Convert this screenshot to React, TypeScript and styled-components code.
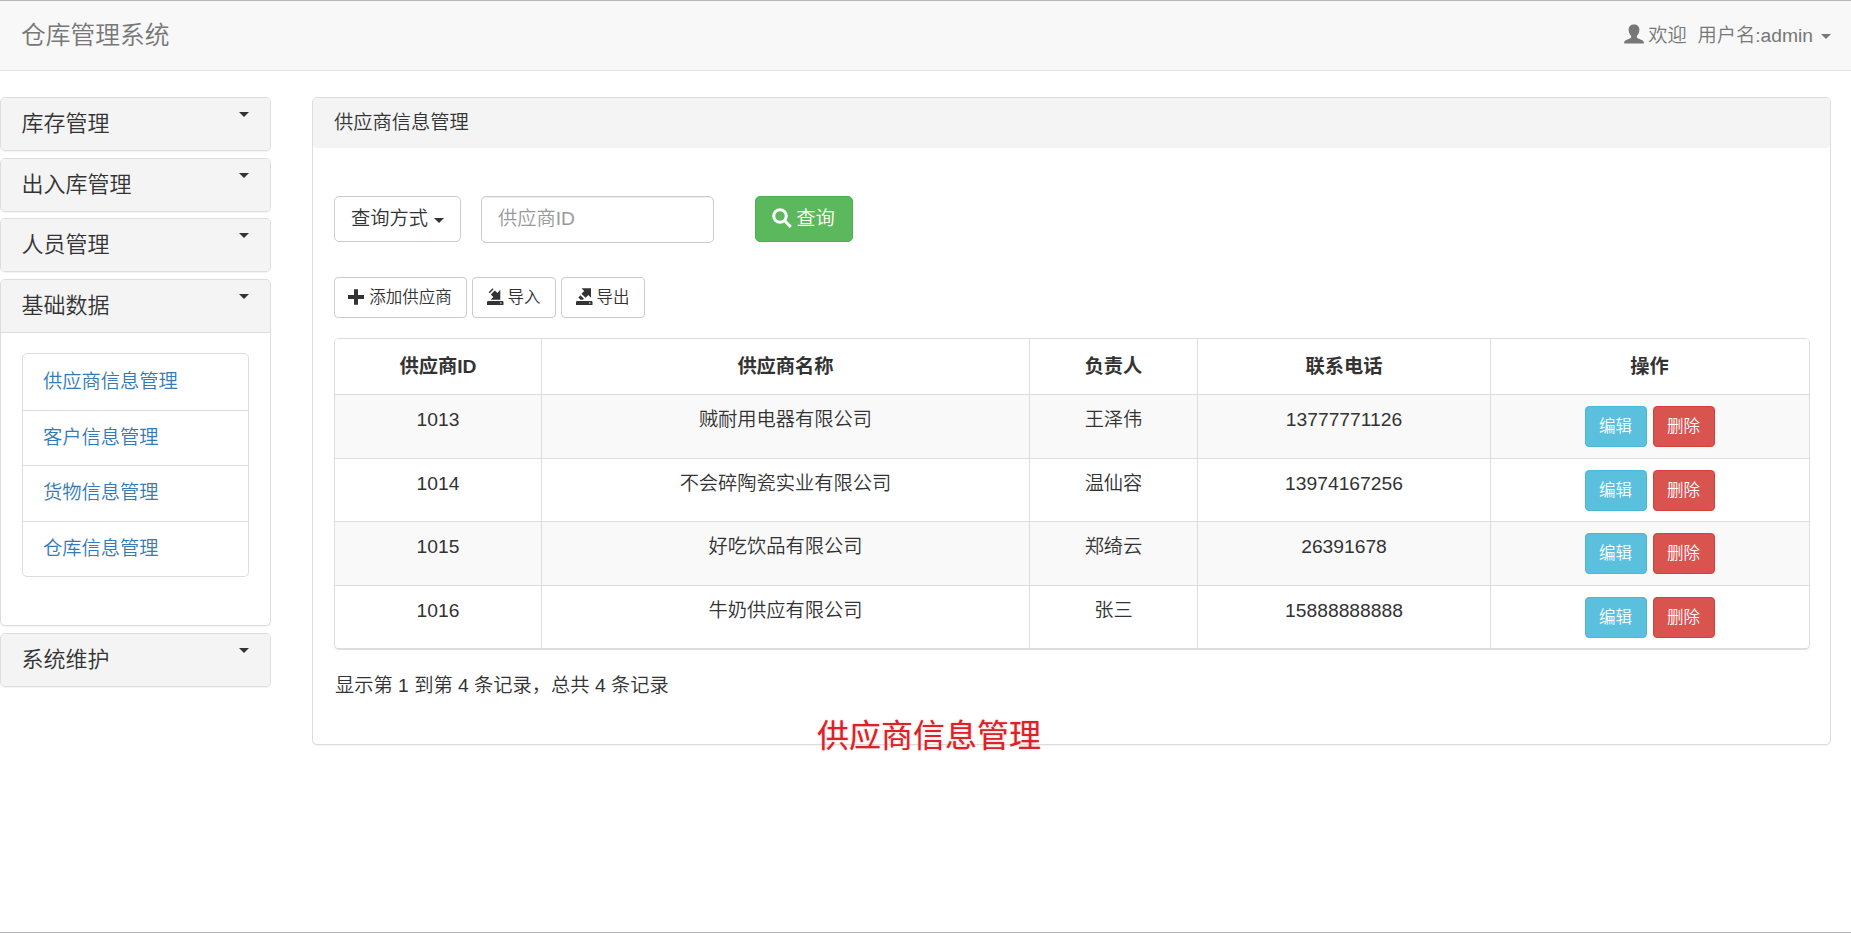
import React from 'react';
import styled, { createGlobalStyle, css } from 'styled-components';

const GlobalStyle = createGlobalStyle`
  * { box-sizing: border-box; }
  body {
    margin: 0;
    background: #fff;
    color: #333;
    font: 350 19.25px/27.5px "Liberation Sans", "Noto Sans CJK SC", sans-serif;
  }
  button, input { font: inherit; color: inherit; }
`;

const Page = styled.div`
  height: 933px;
  border-top: 1px solid #b9b9b9;
  border-bottom: 1px solid #b5b5b9;
  overflow: hidden;
`;

const Navbar = styled.header`
  height: 70px;
  display: flex;
  align-items: center;
  justify-content: space-between;
  padding: 0 20px 0 21px;
  background: #f8f8f8;
  border-bottom: 1px solid #e4e4e4;
  color: #777;
`;

const Brand = styled.div`
  font-size: 24.75px;
`;

const UserMenu = styled.div`
  display: flex;
  align-items: center;
  white-space: pre;
`;

const Caret = styled.span<{ $gap?: number; $drop?: number }>`
  flex: none;
  border: 5px solid transparent;
  border-top-color: currentColor;
  border-bottom: 0;
  margin-left: ${(p) => p.$gap ?? 0}px;
  margin-top: ${(p) => p.$drop ?? 0}px;
`;

const Columns = styled.div`
  display: flex;
  align-items: flex-start;
  padding-top: 26px;
`;

const Sidebar = styled.nav`
  width: 271px;
  margin-right: 41px;
  display: flex;
  flex-direction: column;
  gap: 6.7px;
`;

const Card = styled.section`
  border: 1px solid #ddd;
  border-radius: 5px;
  background: #fff;
  box-shadow: 0 1px 1px rgba(0, 0, 0, 0.05);
`;

const MenuHeading = styled.h4<{ $open?: boolean }>`
  height: 52px;
  margin: 0;
  padding: 14px 21px 0 20.6px;
  display: flex;
  justify-content: space-between;
  font-size: 22px;
  line-height: 24px;
  font-weight: inherit;
  background: #f4f4f4;
  border-radius: 4px;
  ${(p) => p.$open && css`
    height: 53px;
    border-bottom: 1px solid #ddd;
    border-radius: 4px 4px 0 0;
  `}
`;

const MenuBody = styled.div`
  height: 292px;
  padding: 20px 21px 0;
`;

const LinkList = styled.ul`
  list-style: none;
  margin: 0;
  padding: 0;
  border: 1px solid #ddd;
  border-radius: 5px;
`;

const LinkItem = styled.li`
  height: 55.5px;
  padding: 13.6px 20px;
  color: #337ab7;
  & + & { border-top: 1px solid #ddd; padding-top: 13px; }
`;

const Main = styled(Card)`
  position: relative;
  width: 1519px;
  height: 648px;
`;

const MainHeading = styled.div`
  height: 50px;
  padding: 11px 21px;
  background: #f4f4f4;
  border-radius: 4px;
`;

const SearchBar = styled.div`
  display: flex;
  margin: 48px 0 0 21px;
`;

type Tone = 'plain' | 'green' | 'blue' | 'red';
const tones: Record<Tone, [string, string, string]> = {
  plain: ['#fff', '#ccc', '#333'],
  green: ['#5cb85c', '#4cae4c', '#fff'],
  blue: ['#5bc0de', '#46b8da', '#fff'],
  red: ['#d9534f', '#d43f3a', '#fff'],
};

const Button = styled.button<{ $tone?: Tone; $small?: boolean; $width: number }>`
  display: inline-flex;
  align-items: center;
  justify-content: center;
  flex: none;
  width: ${(p) => p.$width}px;
  height: ${(p) => (p.$small ? 41 : 46)}px;
  padding: ${(p) => (p.$small ? '1px 0 0' : '0 0 1px')};
  white-space: nowrap;
  border: 1px solid ${(p) => tones[p.$tone ?? 'plain'][1]};
  border-radius: ${(p) => (p.$small ? 4 : 5)}px;
  background: ${(p) => tones[p.$tone ?? 'plain'][0]};
  color: ${(p) => tones[p.$tone ?? 'plain'][2]};
  font-size: ${(p) => (p.$small ? 16.5 : 19.25)}px;
`;

const SearchInput = styled.input`
  width: 233px;
  height: 47px;
  margin: 0 41px 0 20px;
  padding: 0 16px 2px;
  border: 1px solid #ccc;
  border-radius: 5px;
  box-shadow: inset 0 1px 1px rgba(0, 0, 0, 0.075);
  &::placeholder { color: #999; opacity: 1; }
`;

const Toolbar = styled.div`
  display: flex;
  gap: 5px;
  margin: 34px 0 0 21px;
`;

const Icon = styled.svg<{ $size: number; $gap: number; $lift?: number }>`
  flex: none;
  width: ${(p) => p.$size}px;
  height: ${(p) => p.$size}px;
  margin: 0 ${(p) => p.$gap}px ${(p) => p.$lift ?? 2}px -1px;
  fill: currentColor;
`;

const TableFrame = styled.div`
  width: 1476px;
  margin: 20px 0 0 21px;
  border: 1px solid #ddd;
  border-bottom-width: 2px;
  border-radius: 5px;
  overflow: hidden;
`;

const Row = styled.div<{ $height: number; $striped?: boolean }>`
  display: grid;
  grid-template-columns: 206px 488px 168px 293px 319px;
  height: ${(p) => p.$height}px;
  background: ${(p) => (p.$striped ? '#f9f9f9' : '#fff')};
  & + & { border-top: 1px solid #ddd; }
`;

const Cell = styled.div<{ $head?: boolean }>`
  display: flex;
  justify-content: center;
  gap: 6px;
  padding-top: ${(p) => (p.$head ? 14 : 11)}px;
  font-weight: ${(p) => (p.$head ? 700 : 'inherit')};
  & + & { border-left: 1px solid #ddd; }
  &:last-child { padding-right: 1px; }
`;

const Summary = styled.div`
  margin: 22px 0 0 22px;
`;

const Caption = styled.div`
  position: absolute;
  left: 504px;
  top: 615px;
  font-size: 32px;
  line-height: 46px;
  font-weight: 400;
  color: #dc2127;
  text-shadow: 0 0 2px rgba(220, 33, 39, 0.35);
`;

const UserIcon = () => (
  <Icon viewBox="0 0 20 20" $size={20} $gap={4} $lift={3}>
    <path d="M10 .5c3.300 0 5.400 2 5.400 5.300 0 2.500-1.100 4.900-2.600 6.200v1.100c0 .6.300.9.900 1.200l4.500 2c1.100.5 1.600 1.200 1.600 2.400v.8H.2v-.8c0-1.200.5-1.900 1.600-2.400l4.500-2c.6-.3.9-.6.9-1.200V12C5.700 10.700 4.600 8.300 4.600 5.800 4.600 2.500 6.700.5 10 .5z" />
  </Icon>
);

const SearchIcon = () => (
  <Icon viewBox="0 0 20 20" $size={20} $gap={4}>
    <circle cx="8" cy="8" r="6.300" fill="none" stroke="currentColor" strokeWidth="3" />
    <path d="M11.200 13.200l2-2 6.100 6.100c.4.400.4.800 0 1.200l-.9.900c-.4.400-.8.400-1.200 0z" />
  </Icon>
);

const PlusIcon = () => (
  <Icon viewBox="0 0 16 16" $size={16} $gap={5}>
    <path d="M6 .3h4V6h6v4h-6v5.700H6V10H0V6h6z" />
  </Icon>
);

const DiskIconBase = () => (
  <path fillRule="evenodd" d="M.8 13h15l.7.8V17H0v-3.200zM13 14.500v1h1.500v-1z" />
);

const ImportIcon = () => (
  <Icon viewBox="0 0 17 17" $size={17} $gap={4} $lift={3}>
    <DiskIconBase />
    <path d="M13.300 1.800v9.900H3.600l2.700-2.700-2.500-2.500 4-4 2.600 2.500z" />
    <path d="M2.600 5.200l4-4-1-1-4 4z" />
  </Icon>
);

const ExportIcon = () => (
  <Icon viewBox="0 0 17 17" $size={17} $gap={4} $lift={3}>
    <DiskIconBase />
    <path d="M5.500 .2H15v9.600l-2.700-2.700-2.700 2.700-4.100-4.100 2.700-2.700z" />
    <path d="M4.400 7.300l3.500 3.500-.9.900H4.600L2.400 9.500z" />
  </Icon>
);

const suppliers = [
  ['1013', '贼耐用电器有限公司', '王泽伟', '13777771126'],
  ['1014', '不会碎陶瓷实业有限公司', '温仙容', '13974167256'],
  ['1015', '好吃饮品有限公司', '郑绮云', '26391678'],
  ['1016', '牛奶供应有限公司', '张三', '15888888888'],
];
const rowHeights = [64, 63, 64, 63];
const columns = ['供应商ID', '供应商名称', '负责人', '联系电话', '操作'];
const links = ['供应商信息管理', '客户信息管理', '货物信息管理', '仓库信息管理'];
const menus = ['库存管理', '出入库管理', '人员管理', '基础数据', '系统维护'];

export default function App() {
  return (
    <Page>
      <GlobalStyle />
      <Navbar>
        <Brand>仓库管理系统</Brand>
        <UserMenu>
          <UserIcon />
          <span>欢迎&nbsp; 用户名:admin</span>
          <Caret $gap={8} $drop={2} />
        </UserMenu>
      </Navbar>
      <Columns>
        <Sidebar>
          {menus.map((name) => {
            const open = name === '基础数据';
            return (
              <Card key={name}>
                <MenuHeading $open={open}>
                  {name}
                  <Caret />
                </MenuHeading>
                {open && (
                  <MenuBody>
                    <LinkList>
                      {links.map((link) => <LinkItem key={link}>{link}</LinkItem>)}
                    </LinkList>
                  </MenuBody>
                )}
              </Card>
            );
          })}
        </Sidebar>
        <Main>
          <MainHeading>供应商信息管理</MainHeading>
          <SearchBar>
            <Button $width={127}>查询方式<Caret $gap={6} $drop={4} /></Button>
            <SearchInput placeholder="供应商ID" />
            <Button $tone="green" $width={98}><SearchIcon />查询</Button>
          </SearchBar>
          <Toolbar>
            <Button $small $width={133}><PlusIcon />添加供应商</Button>
            <Button $small $width={84}><ImportIcon />导入</Button>
            <Button $small $width={84}><ExportIcon />导出</Button>
          </Toolbar>
          <TableFrame>
            <Row $height={55}>
              {columns.map((c) => <Cell key={c} $head>{c}</Cell>)}
            </Row>
            {suppliers.map((s, i) => (
              <Row key={s[0]} $height={rowHeights[i]} $striped={i % 2 === 0}>
                {s.map((value) => <Cell key={value}>{value}</Cell>)}
                <Cell>
                  <Button $small $tone="blue" $width={62}>编辑</Button>
                  <Button $small $tone="red" $width={62}>删除</Button>
                </Cell>
              </Row>
            ))}
          </TableFrame>
          <Summary>显示第 1 到第 4 条记录，总共 4 条记录</Summary>
          <Caption>供应商信息管理</Caption>
        </Main>
      </Columns>
    </Page>
  );
}
